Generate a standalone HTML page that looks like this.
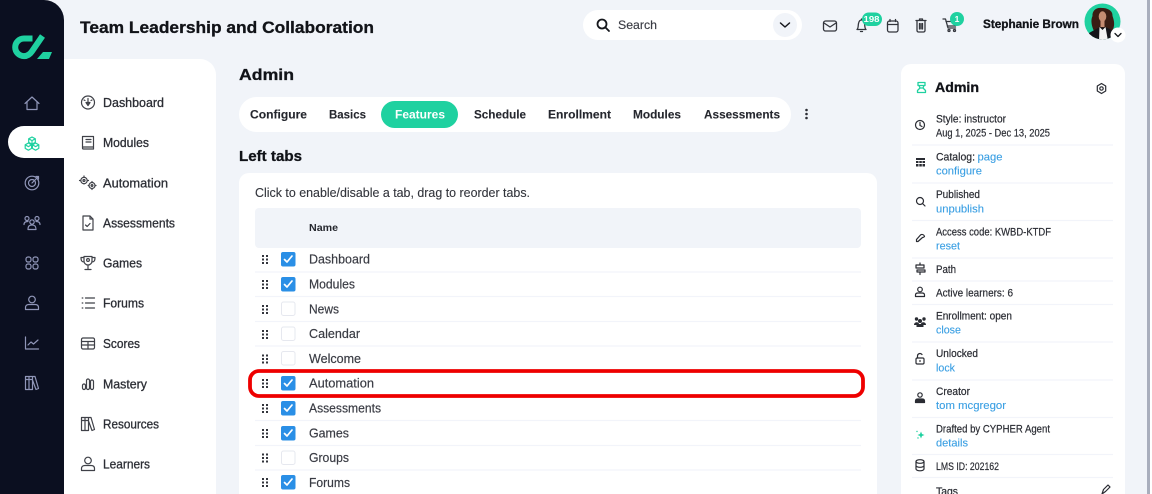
<!DOCTYPE html>
<html lang="en"><head><meta charset="utf-8"><title>Admin - Features</title>
<style>
html,body{margin:0;padding:0;width:1152px;height:494px;overflow:hidden;background:#f1f4f9}
svg{display:block;filter:blur(.3px)}
text{font-family:"Liberation Sans",sans-serif}
.n{font-size:12.8px;fill:#2c2e35;stroke:#2c2e35;stroke-width:.3}
.r{font-size:12.6px;fill:#3a3c44;stroke:#3a3c44;stroke-width:.18}
.t{font-size:12.4px;font-weight:700;fill:#25272e;stroke:#25272e;stroke-width:.1}
.p{font-size:10.8px;fill:#2a2c33;stroke:#2a2c33;stroke-width:.2}
.l{font-size:10.8px;fill:#3a9fe3;stroke:#3a9fe3;stroke-width:.12}
.h{font-weight:700;fill:#111318;stroke:#111318;stroke-width:.3}
.ic{fill:none;stroke:#3f4148;stroke-width:1.2;stroke-linecap:round;stroke-linejoin:round}
.sb{fill:none;stroke:#9096b8;stroke-width:1.2;stroke-linecap:round;stroke-linejoin:round}
.pi{fill:none;stroke:#2a2c33;stroke-width:1.2;stroke-linecap:round;stroke-linejoin:round}
.d{stroke:#f2f4fa;stroke-width:1.2}
</style></head><body>
<svg width="1152" height="494" viewBox="0 0 1152 494" xmlns="http://www.w3.org/2000/svg">
<rect width="1152" height="494" fill="#f1f4f9"/>
<rect x="1147" y="0" width="3" height="494" fill="#a9aebd"/><rect x="1150" y="0" width="2" height="494" fill="#fff"/>

<!-- white nav panel -->
<path d="M64 59H200a16 16 0 0 1 16 16V494H64Z" fill="#fff"/>
<!-- dark sidebar -->
<path d="M0 0H44a20 20 0 0 1 20 20V494H0Z" fill="#0b0f20"/>
<path d="M64 126H24a16 16 0 0 0 0 32H64Z" fill="#fff"/>

<!-- logo -->
<path d="M32.500 38.500H24a8.800 8.800 0 0 0 0 17.600c3.800 0 6-1.800 8-4.800L42.500 36" fill="none" stroke="#1fd1a0" stroke-width="6"/>
<path d="M43 52H52L49 59H37Z" fill="#1fd1a0"/>

<!-- sidebar icons -->
<g class="sb">
<path d="M25 103.500L32 97L39 103.500M27 101.500V109.500H37V101.500"/>
<g transform="translate(32 183)"><circle r="6.800"/><circle r="3.500"/><path d="M0 0L6 -6M4 -6.500H6.500V-4"/></g>
<g transform="translate(32 222)"><circle cx="-5" cy="-3.500" r="2"/><circle cx="5" cy="-3.500" r="2"/><circle cx="0" cy="0" r="2.200"/><path d="M-8 2.500C-8 0-6-.5-4-.5M8 2.500C8 0 6-.5 4-.5M-4 7.500C-4 3.500-2 3-0 3S4 3.500 4 7.500Z"/></g>
<g transform="translate(32 263)"><rect x="-6" y="-6" width="5" height="5" rx="2"/><rect x="1" y="-6" width="5" height="5" rx="2"/><rect x="-6" y="1" width="5" height="5" rx="2"/><rect x="1" y="1" width="5" height="5" rx="2"/></g>
<g transform="translate(32 303)"><circle cy="-3.500" r="3.300"/><path d="M-6.500 6.500V4.500C-6.500 2.500-5 1.500-3 1.500H3C5 1.500 6.500 2.500 6.500 4.500V6.500Z"/></g>
<g transform="translate(32 343)"><path d="M-6.500 -6V6H6.500M-4 2L-1 -1L1.500 1L6 -3"/></g>
<g transform="translate(32 383)"><path d="M-6.500 -6.500H-3V6.500H-6.500ZM-3 -6.500H.5V6.500H-3ZM.5 -6.500H3L6.500 5.500L4 6.500L.5 -3M-6.500 -3.500H.5"/></g>
</g>
<!-- active icon: cubes -->
<g fill="none" stroke="#1fd1a0" stroke-width="1.200" stroke-linejoin="round">
<path d="M32 137L35.300 138.800V142.400L32 144.200L28.700 142.400V138.800Z"/>
<path d="M28.400 143L31.600 144.800V148.400L28.400 150.200L25.200 148.400V144.800Z"/>
<path d="M35.600 143L38.800 144.800V148.400L35.600 150.200L32.400 148.400V144.800Z"/>
<path d="M28.700 138.800L32 140.600L35.300 138.800M32 140.600V144M25.200 144.800L28.400 146.600L31.600 144.800M32.400 144.800L35.600 146.600L38.800 144.800"/>
</g>

<!-- nav icons -->
<g class="ic">
<g transform="translate(88 102.500)"><circle r="6.500"/><path d="M0 -4V1M-2 0H2L0 3Z M-4 -2.500L-3 -2M4 -2.500L3 -2"/></g>
<g transform="translate(88 142.500)"><path d="M-5.500 -6H5.500V4.500H-4.500A1 1 0 0 0 -5.500 5.500ZM-5.500 5.500A1 1 0 0 0 -4.500 6.500H5.500V4.500M-2 -3H3M-2 -.5H3"/></g>
<g transform="translate(88 183)"><circle cx="-4" cy="-2.500" r="3.200"/><circle cx="-4" cy="-2.500" r="1"/><circle cx="4" cy="2.500" r="3"/><circle cx="4" cy="2.500" r=".9"/><path d="M-4 -7V-5.800M-8.500 -2.500H-7.300M-.7 -2.500H.5M-4 1V.7M4 -1.500V-.5M4 5.500V6.500M.2 2.500H1M7 2.500H8"/></g>
<g transform="translate(88 223)"><path d="M-5 -7H2L5 -4V7H-5ZM2 -7V-4H5M-2.500 2L-.8 3.500L2 .5"/></g>
<g transform="translate(88 263)"><path d="M-4 -6.500H4V-2A4 4 0 0 1 -4 -2ZM-4 -5.500H-7C-7 -2-6-1-3.800 -1M4 -5.500H7C7 -2 6-1 3.800 -1M0 2V6M-3 6.500H3"/><circle cy="-3" r="1.400"/></g>
<g transform="translate(88 303)"><path d="M-2.500 -5H6.500M-2.500 0H6.500M-2.500 5H6.500M-5.800 -5H-5.200M-5.800 0H-5.200M-5.800 5H-5.200"/></g>
<g transform="translate(88 343.500)"><rect x="-6.500" y="-5.500" width="13" height="11" rx="1.500"/><path d="M-6.500 -2H6.500M-6.500 1.500H6.500M0 -2V5.500"/></g>
<g transform="translate(88 384)"><rect x="-5.500" y="0" width="3" height="5.500" rx="1.500"/><rect x="-1.500" y="-5" width="3" height="10.500" rx="1.500"/><rect x="2.500" y="-4" width="3" height="9.500" rx="1.500"/></g>
<g transform="translate(88 424)"><path d="M-6.500 -6.500H-3V6.500H-6.500ZM-3 -6.500H.5V6.500H-3ZM.5 -6.500H3L6.500 5.500L4 6.500L.5 -3M-6.500 -3.500H.5"/></g>
<g transform="translate(88 464)"><circle cy="-3.500" r="3.300"/><path d="M-6.500 6.500V4.500C-6.500 2.500-5 1.500-3 1.500H3C5 1.500 6.500 2.500 6.500 4.500V6.500Z"/></g>
</g>

<!-- nav text -->
<text class="n" x="103" y="107" textLength="61" lengthAdjust="spacingAndGlyphs">Dashboard</text>
<text class="n" x="103" y="147" textLength="46" lengthAdjust="spacingAndGlyphs">Modules</text>
<text class="n" x="103" y="187.500" textLength="65" lengthAdjust="spacingAndGlyphs">Automation</text>
<text class="n" x="103" y="227.500" textLength="72" lengthAdjust="spacingAndGlyphs">Assessments</text>
<text class="n" x="103" y="267.500" textLength="39" lengthAdjust="spacingAndGlyphs">Games</text>
<text class="n" x="103" y="307.500" textLength="41" lengthAdjust="spacingAndGlyphs">Forums</text>
<text class="n" x="103" y="348" textLength="37" lengthAdjust="spacingAndGlyphs">Scores</text>
<text class="n" x="103" y="388.500" textLength="44" lengthAdjust="spacingAndGlyphs">Mastery</text>
<text class="n" x="103" y="428.500" textLength="56" lengthAdjust="spacingAndGlyphs">Resources</text>
<text class="n" x="103" y="468.500" textLength="47" lengthAdjust="spacingAndGlyphs">Learners</text>

<!-- header -->
<text class="h" x="80" y="33" font-size="17" textLength="294" lengthAdjust="spacingAndGlyphs">Team Leadership and Collaboration</text>
<rect x="583" y="10" width="219" height="30" rx="15" fill="#fff"/>
<g fill="none" stroke="#15171c" stroke-width="1.800" stroke-linecap="round"><circle cx="602" cy="24" r="4.500"/><path d="M605.500 27.500L609 31"/></g>
<text x="618" y="29" font-size="11.600" fill="#3a3c44" stroke="#3a3c44" stroke-width=".15" textLength="39" lengthAdjust="spacingAndGlyphs">Search</text>
<circle cx="785" cy="25" r="12" fill="#f1f4f9"/>
<path d="M780.500 23L785 27L789.500 23" fill="none" stroke="#15171c" stroke-width="1.500" stroke-linecap="round" stroke-linejoin="round"/>

<g class="ic" style="stroke:#33353c;stroke-width:1.300">
<rect x="823.500" y="21" width="13" height="10" rx="2"/><path d="M824 23L830 27L836 23"/>
<path d="M857 29.500C858.500 28 858 26 858.500 23.500C859 21 860 20 861.500 20C863 20 864 21 864.500 23.500C865 26 864.500 28 866 29.500ZM860.500 31.500H862.500M861.500 19V20"/>
<rect x="887.500" y="21" width="10.500" height="11" rx="2"/><path d="M887.500 24.500H898M890 19.500V21.500M895.500 19.500V21.500"/>
<path d="M916 20.500H926M919.500 20.500V19H922.500V20.500M917 20.500V30.500A1.500 1.500 0 0 0 918.500 32H923.500A1.500 1.500 0 0 0 925 30.500V20.500M919.500 23.500V29M921 23.500V29M922.500 23.500V29"/>
<path d="M943 19H945.500L948 28H955.500M946 21.500H957L955.500 26H947.300"/><circle cx="949" cy="30.500" r="1"/><circle cx="954.500" cy="30.500" r="1"/>
</g>
<rect x="862" y="12.500" width="20" height="13.500" rx="6.700" fill="#1fd1a0"/>
<text x="863.500" y="22" font-size="8.500" font-weight="700" fill="#fff" textLength="16" lengthAdjust="spacingAndGlyphs">198</text>
<circle cx="957" cy="19" r="7" fill="#1fd1a0"/>
<text x="957" y="22" font-size="8.500" font-weight="700" fill="#fff" text-anchor="middle">1</text>

<text class="h" x="983" y="28" font-size="11.800" textLength="96" lengthAdjust="spacingAndGlyphs">Stephanie Brown</text>
<!-- avatar -->
<clipPath id="av"><circle cx="1102.500" cy="21.500" r="18"/></clipPath>
<g clip-path="url(#av)">
<rect x="1084" y="3" width="37" height="37" fill="#1fd1a0"/>
<path d="M1102 8C1096 7 1092 11 1092.500 16C1090.500 20 1091.500 26 1094 31L1112 31C1115.500 26 1114 20 1112.500 16C1113 11 1108 8 1102 8Z" fill="#3a1d14"/>
<ellipse cx="1102.500" cy="16.500" rx="3.800" ry="5.200" fill="#c68c72"/>
<path d="M1100.500 20H1104.500V27H1100.500Z" fill="#c68c72"/>
<path d="M1086 41L1089 33L1099 27.500L1107 27.500L1113 31L1116 41Z" fill="#15151a"/>
<path d="M1099.500 27L1102.500 30L1105.500 27L1108 41H1099Z" fill="#f4f4f4"/>
</g>
<circle cx="1118" cy="35" r="7.500" fill="#fff"/>
<path d="M1115 33.500L1118 36.500L1121 33.500" fill="none" stroke="#15171c" stroke-width="1.300" stroke-linecap="round" stroke-linejoin="round"/>

<!-- main heading & tabs -->
<text class="h" x="239" y="80" font-size="16" textLength="55" lengthAdjust="spacingAndGlyphs">Admin</text>
<rect x="239" y="97" width="552" height="35" rx="17.500" fill="#fff"/>
<rect x="381" y="101" width="77" height="27" rx="13.500" fill="#1fd1a0"/>
<text class="t" x="250" y="118.500" textLength="57" lengthAdjust="spacingAndGlyphs">Configure</text>
<text class="t" x="329" y="118.500" textLength="37" lengthAdjust="spacingAndGlyphs">Basics</text>
<text class="t" x="395" y="118.500" textLength="50" lengthAdjust="spacingAndGlyphs" style="fill:#fff;stroke:none">Features</text>
<text class="t" x="474" y="118.500" textLength="52" lengthAdjust="spacingAndGlyphs">Schedule</text>
<text class="t" x="548" y="118.500" textLength="63" lengthAdjust="spacingAndGlyphs">Enrollment</text>
<text class="t" x="633" y="118.500" textLength="48" lengthAdjust="spacingAndGlyphs">Modules</text>
<text class="t" x="704" y="118.500" textLength="76" lengthAdjust="spacingAndGlyphs">Assessments</text>
<g fill="#2c2e35"><circle cx="806.500" cy="110" r="1.300"/><circle cx="806.500" cy="114" r="1.300"/><circle cx="806.500" cy="118" r="1.300"/></g>

<text class="h" x="239" y="161" font-size="14.500" textLength="63" lengthAdjust="spacingAndGlyphs">Left tabs</text>

<!-- card -->
<path d="M249 173H867a10 10 0 0 1 10 10V494H239V183a10 10 0 0 1 10-10Z" fill="#fff"/>
<text x="255" y="197" font-size="12.600" fill="#33353c" stroke="#33353c" stroke-width=".12" textLength="275" lengthAdjust="spacingAndGlyphs">Click to enable/disable a tab, drag to reorder tabs.</text>
<rect x="255" y="208" width="606" height="40" rx="4" fill="#f1f4f9"/>
<text x="309" y="231" font-size="9.800" font-weight="700" fill="#25272e" textLength="29" lengthAdjust="spacingAndGlyphs">Name</text>

<!-- row dividers -->
<g class="d">
<path d="M255 272H861M255 296.500H861M255 321.500H861M255 346H861M255 371H861M255 420.500H861M255 445.500H861M255 470H861"/>
</g>

<!-- grips -->
<g fill="#33353c">
<g><rect x="262" y="255" width="2" height="2"/><rect x="266" y="255" width="2" height="2"/><rect x="262" y="258.500" width="2" height="2"/><rect x="266" y="258.500" width="2" height="2"/><rect x="262" y="262" width="2" height="2"/><rect x="266" y="262" width="2" height="2"/></g>
<g transform="translate(0 25)"><rect x="262" y="255" width="2" height="2"/><rect x="266" y="255" width="2" height="2"/><rect x="262" y="258.500" width="2" height="2"/><rect x="266" y="258.500" width="2" height="2"/><rect x="262" y="262" width="2" height="2"/><rect x="266" y="262" width="2" height="2"/></g>
<g transform="translate(0 50)"><rect x="262" y="255" width="2" height="2"/><rect x="266" y="255" width="2" height="2"/><rect x="262" y="258.500" width="2" height="2"/><rect x="266" y="258.500" width="2" height="2"/><rect x="262" y="262" width="2" height="2"/><rect x="266" y="262" width="2" height="2"/></g>
<g transform="translate(0 75)"><rect x="262" y="255" width="2" height="2"/><rect x="266" y="255" width="2" height="2"/><rect x="262" y="258.500" width="2" height="2"/><rect x="266" y="258.500" width="2" height="2"/><rect x="262" y="262" width="2" height="2"/><rect x="266" y="262" width="2" height="2"/></g>
<g transform="translate(0 99.500)"><rect x="262" y="255" width="2" height="2"/><rect x="266" y="255" width="2" height="2"/><rect x="262" y="258.500" width="2" height="2"/><rect x="266" y="258.500" width="2" height="2"/><rect x="262" y="262" width="2" height="2"/><rect x="266" y="262" width="2" height="2"/></g>
<g transform="translate(0 124)"><rect x="262" y="255" width="2" height="2"/><rect x="266" y="255" width="2" height="2"/><rect x="262" y="258.500" width="2" height="2"/><rect x="266" y="258.500" width="2" height="2"/><rect x="262" y="262" width="2" height="2"/><rect x="266" y="262" width="2" height="2"/></g>
<g transform="translate(0 149)"><rect x="262" y="255" width="2" height="2"/><rect x="266" y="255" width="2" height="2"/><rect x="262" y="258.500" width="2" height="2"/><rect x="266" y="258.500" width="2" height="2"/><rect x="262" y="262" width="2" height="2"/><rect x="266" y="262" width="2" height="2"/></g>
<g transform="translate(0 174)"><rect x="262" y="255" width="2" height="2"/><rect x="266" y="255" width="2" height="2"/><rect x="262" y="258.500" width="2" height="2"/><rect x="266" y="258.500" width="2" height="2"/><rect x="262" y="262" width="2" height="2"/><rect x="266" y="262" width="2" height="2"/></g>
<g transform="translate(0 198.500)"><rect x="262" y="255" width="2" height="2"/><rect x="266" y="255" width="2" height="2"/><rect x="262" y="258.500" width="2" height="2"/><rect x="266" y="258.500" width="2" height="2"/><rect x="262" y="262" width="2" height="2"/><rect x="266" y="262" width="2" height="2"/></g>
<g transform="translate(0 223)"><rect x="262" y="255" width="2" height="2"/><rect x="266" y="255" width="2" height="2"/><rect x="262" y="258.500" width="2" height="2"/><rect x="266" y="258.500" width="2" height="2"/><rect x="262" y="262" width="2" height="2"/><rect x="266" y="262" width="2" height="2"/></g>
</g>

<!-- checked boxes -->
<g fill="#2a8fe6">
<rect x="281" y="252" width="14.500" height="14.500" rx="2"/>
<rect x="281" y="277" width="14.500" height="14.500" rx="2"/>
<rect x="281" y="376" width="14.500" height="14.500" rx="2"/>
<rect x="281" y="401" width="14.500" height="14.500" rx="2"/>
<rect x="281" y="426" width="14.500" height="14.500" rx="2"/>
<rect x="281" y="475" width="14.500" height="14.500" rx="2"/>
</g>
<g fill="none" stroke="#fff" stroke-width="1.700" stroke-linecap="round" stroke-linejoin="round">
<path d="M284.500 259.500L287 262L292 256"/>
<path d="M284.500 284.500L287 287L292 281"/>
<path d="M284.500 383.500L287 386L292 380"/>
<path d="M284.500 408.500L287 411L292 405"/>
<path d="M284.500 433.500L287 436L292 430"/>
<path d="M284.500 482.500L287 485L292 479"/>
</g>
<!-- unchecked boxes -->
<g fill="#fff" stroke="#e6e8ef" stroke-width="1">
<rect x="281.500" y="302" width="13.500" height="13.500" rx="2"/>
<rect x="281.500" y="327" width="13.500" height="13.500" rx="2"/>
<rect x="281.500" y="351.500" width="13.500" height="13.500" rx="2"/>
<rect x="281.500" y="451" width="13.500" height="13.500" rx="2"/>
</g>

<!-- row text -->
<text class="r" x="309" y="263.500" textLength="61" lengthAdjust="spacingAndGlyphs">Dashboard</text>
<text class="r" x="309" y="288.500" textLength="46" lengthAdjust="spacingAndGlyphs">Modules</text>
<text class="r" x="309" y="313.500" textLength="30" lengthAdjust="spacingAndGlyphs">News</text>
<text class="r" x="309" y="338" textLength="51" lengthAdjust="spacingAndGlyphs">Calendar</text>
<text class="r" x="309" y="363" textLength="52" lengthAdjust="spacingAndGlyphs">Welcome</text>
<text class="r" x="309" y="387.500" textLength="65" lengthAdjust="spacingAndGlyphs">Automation</text>
<text class="r" x="309" y="412.500" textLength="72" lengthAdjust="spacingAndGlyphs">Assessments</text>
<text class="r" x="309" y="437.500" textLength="40" lengthAdjust="spacingAndGlyphs">Games</text>
<text class="r" x="309" y="462" textLength="40" lengthAdjust="spacingAndGlyphs">Groups</text>
<text class="r" x="309" y="487" textLength="41" lengthAdjust="spacingAndGlyphs">Forums</text>

<!-- red highlight -->
<rect x="250" y="371" width="613" height="25" rx="9" fill="none" stroke="#ee0000" stroke-width="3.800"/>

<!-- right panel -->
<path d="M911 64H1115a10 10 0 0 1 10 10V494H901V74a10 10 0 0 1 10-10Z" fill="#fff"/>
<g fill="none" stroke="#1fd1a0" stroke-width="1.300" stroke-linejoin="round"><path d="M918 82.500H925V85.500H918ZM919 85.500L920 88H923L924 85.500M920 88L917.500 90.500V92.500H925.500V90.500L923 88"/></g>
<text class="h" x="935" y="92" font-size="13.500" textLength="44" lengthAdjust="spacingAndGlyphs">Admin</text>
<g class="pi"><circle cx="1101.500" cy="88.500" r="1.700"/><path d="M1101.500 83.500L1105.700 86V91L1101.500 93.500L1097.300 91V86Z"/></g>

<g class="d">
<path d="M912 145H1113M912 183H1113M912 220.500H1113M912 258H1113M912 281H1113M912 304.500H1113M912 342H1113M912 380H1113M912 417.500H1113M912 454.500H1113M912 477.500H1113"/>
</g>

<text class="p" x="936" y="122.500" textLength="70" lengthAdjust="spacingAndGlyphs">Style: instructor</text>
<text class="p" x="936" y="136.500" textLength="114" lengthAdjust="spacingAndGlyphs">Aug 1, 2025 - Dec 13, 2025</text>
<text class="p" x="936" y="160.500" textLength="39" lengthAdjust="spacingAndGlyphs">Catalog:</text>
<text class="l" x="977.500" y="160.500" textLength="25" lengthAdjust="spacingAndGlyphs">page</text>
<text class="l" x="936" y="174.500" textLength="46" lengthAdjust="spacingAndGlyphs">configure</text>
<text class="p" x="936" y="198" textLength="44" lengthAdjust="spacingAndGlyphs">Published</text>
<text class="l" x="936" y="212.500" textLength="48" lengthAdjust="spacingAndGlyphs">unpublish</text>
<text class="p" x="936" y="235.500" textLength="115" lengthAdjust="spacingAndGlyphs">Access code: KWBD-KTDF</text>
<text class="l" x="936" y="249.500" textLength="24" lengthAdjust="spacingAndGlyphs">reset</text>
<text class="p" x="936" y="273" textLength="20" lengthAdjust="spacingAndGlyphs">Path</text>
<text class="p" x="936" y="296.500" textLength="77" lengthAdjust="spacingAndGlyphs">Active learners: 6</text>
<text class="p" x="936" y="319.500" textLength="76" lengthAdjust="spacingAndGlyphs">Enrollment: open</text>
<text class="l" x="936" y="333.500" textLength="25" lengthAdjust="spacingAndGlyphs">close</text>
<text class="p" x="936" y="357" textLength="42" lengthAdjust="spacingAndGlyphs">Unlocked</text>
<text class="l" x="936" y="371.500" textLength="19" lengthAdjust="spacingAndGlyphs">lock</text>
<text class="p" x="936" y="395" textLength="34" lengthAdjust="spacingAndGlyphs">Creator</text>
<text class="l" x="936" y="409" textLength="70" lengthAdjust="spacingAndGlyphs">tom mcgregor</text>
<text class="p" x="936" y="432.500" textLength="114" lengthAdjust="spacingAndGlyphs">Drafted by CYPHER Agent</text>
<text class="l" x="936" y="446.500" textLength="32" lengthAdjust="spacingAndGlyphs">details</text>
<text class="p" x="936" y="470" textLength="63" lengthAdjust="spacingAndGlyphs">LMS ID: 202162</text>
<text class="p" x="936" y="495" textLength="22" lengthAdjust="spacingAndGlyphs">Tags</text>

<!-- right panel icons -->
<g class="pi">
<circle cx="920" cy="125" r="4.500"/><path d="M920 122.500V125.500L922 126.500"/>
<circle cx="920" cy="201" r="3.500"/><path d="M922.500 203.500L925 206"/>
<path d="M924.500 236.500A2.500 2.500 0 0 0 920.500 235L916.500 239.500L916.500 241.500L918 241.500L922.500 237.500A2.500 2.500 0 0 0 924.500 236.500Z"/>
<path d="M916 265H924V268H916ZM917 270H925V272H917ZM920 263V265M920 272V274.500"/>
<circle cx="920" cy="289.500" r="2.300"/><path d="M915.500 296.500V295C915.500 293.500 916.500 293 918 293H922C923.500 293 924.500 293.500 924.500 295V296.500Z"/>
<rect x="916" y="358" width="8" height="6" rx="1.300"/><path d="M917.500 358V356A2.500 2.500 0 0 1 922 354.500M920 360.500V361.500"/>
<circle cx="920" cy="395" r="2.200"/><path d="M915.500 402.500V401C915.500 399.500 916.500 399 918 399H922C923.500 399 924.500 399.500 924.500 401V402.500Z"/>
<ellipse cx="920" cy="461.500" rx="4" ry="1.800"/><path d="M916 461.500V469C916 470 918 470.800 920 470.800S924 470 924 469V461.500M916 465.500C916 466.500 918 467.300 920 467.300S924 466.500 924 465.500"/>
<path d="M1102 494L1103.500 489.500L1108 485L1110 487L1105.500 491.500Z"/>
</g>
<!-- catalog grid -->
<g fill="#2a2c33"><rect x="916" y="158" width="9" height="2"/><rect x="916" y="161" width="2.500" height="2"/><rect x="919.300" y="161" width="2.500" height="2"/><rect x="922.500" y="161" width="2.500" height="2"/><rect x="916" y="164" width="2.500" height="2.500"/><rect x="919.300" y="164" width="2.500" height="2.500"/><rect x="922.500" y="164" width="2.500" height="2.500"/></g>
<!-- enrollment icon -->
<g fill="#2a2c33"><circle cx="916.500" cy="319" r="1.700"/><circle cx="924" cy="319" r="1.700"/><circle cx="920" cy="321" r="2"/><path d="M914 325C914 321.500 919 321.500 919 324H921C921 321.500 926 321.500 926 325H923.500V327H916.500V325Z"/></g>
<!-- creator icon fill -->
<path d="M915.500 402.500V401C915.500 399.500 916.500 399 918 399H922C923.500 399 924.500 399.500 924.500 401V402.500Z" fill="#2a2c33"/>
<!-- sparkle -->
<g fill="#1fd1a0"><path d="M921 431.500L922 434L924.500 435L922 436L921 438.500L920 436L917.500 435L920 434Z"/><circle cx="917" cy="431.500" r=".7"/><circle cx="918" cy="438" r=".7"/></g>
</svg>
</body></html>
